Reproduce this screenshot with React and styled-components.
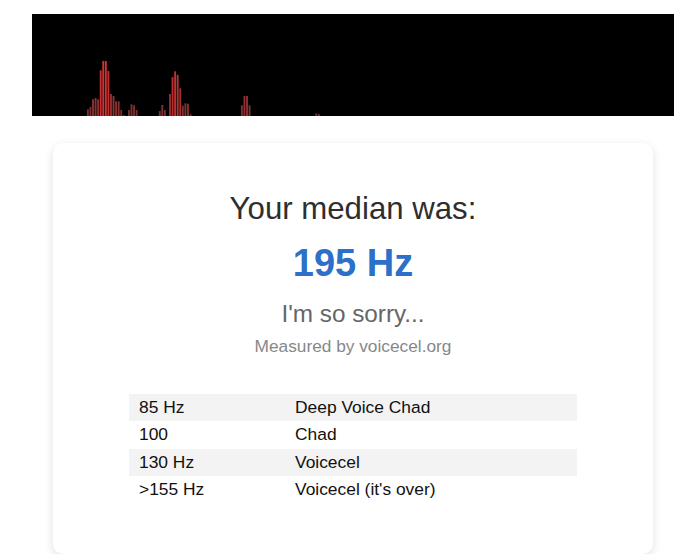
import React from "react";
import styled, { createGlobalStyle } from "styled-components";

const GlobalStyle = createGlobalStyle`
  body {
    margin: 0;
    background: #ffffff;
    font-family: "Liberation Sans", Arial, sans-serif;
  }
`;

const Page = styled.div`
  width: 642px;
  margin: 14px 0 0 32px;
`;

const Visualizer = styled.svg`
  display: block;
  width: 642px;
  height: 102px;
  background: #000000;
`;

const Card = styled.div`
  width: 600px;
  box-sizing: border-box;
  margin: 27px auto 0;
  padding: 48px 76px 51px;
  background: #ffffff;
  border-radius: 10px;
  box-shadow: 0 3px 10px rgba(0, 0, 0, 0.12);
  display: flex;
  flex-direction: column;
  align-items: center;
  text-align: center;
`;

const Title = styled.h1`
  margin: 0;
  font-size: 31.2px;
  font-weight: 400;
  color: #2e2e2e;
`;

const Result = styled.div`
  margin-top: 15px;
  font-size: 38px;
  font-weight: 700;
  color: #2c70c9;
`;

const Verdict = styled.div`
  margin-top: 15px;
  font-size: 24.3px;
  color: #666666;
`;

const Credit = styled.div`
  margin-top: 8px;
  font-size: 17.3px;
  color: #888888;
`;

const Table = styled.div`
  width: 448px;
  margin-top: 37px;
  text-align: left;
`;

const Row = styled.div`
  display: grid;
  grid-template-columns: 156px 1fr;
  height: 27.3px;
  align-items: center;
  background: ${(p) => (p.$striped ? "#f3f3f3" : "transparent")};
`;

const Cell = styled.div`
  padding: 0 10px;
  font-size: 17.4px;
  color: #111111;
`;

const bars = {
  21: 6.7, 22: 9, 23: 16.7, 24: 18, 25: 16.7, 26: 45.7, 27: 55, 28: 55, 29: 45,
  30: 22, 31: 20, 32: 14.7, 33: 14.7, 34: 6, 35: 1, 37: 6, 38: 11.7, 39: 10.7,
  40: 6, 49: 5, 50: 11, 51: 6, 53: 22, 54: 39, 55: 44.7, 56: 41, 57: 27.7,
  58: 10.3, 59: 12.7, 60: 12.3, 61: 2, 81: 10.7, 82: 20, 83: 20, 84: 10.7,
  110: 2.7, 111: 2,
};

const ranges = [
  ["85 Hz", "Deep Voice Chad"],
  ["100", "Chad"],
  ["130 Hz", "Voicecel"],
  [">155 Hz", "Voicecel (it's over)"],
];

export default function App() {
  return (
    <>
      <GlobalStyle />
      <Page>
        <Visualizer viewBox="0 0 642 102">
          {Object.entries(bars).map(([i, h]) => (
            <rect
              key={i}
              x={1 + Number(i) * 2.567}
              y={102 - h}
              width={1.9}
              height={h}
              fill={`rgb(${Math.round(105 + h * 2)}, 48, 48)`}
            />
          ))}
        </Visualizer>
        <Card>
          <Title>Your median was:</Title>
          <Result>195 Hz</Result>
          <Verdict>I'm so sorry...</Verdict>
          <Credit>Measured by voicecel.org</Credit>
          <Table>
            {ranges.map(([hz, label], i) => (
              <Row key={hz} $striped={i % 2 === 0}>
                <Cell>{hz}</Cell>
                <Cell>{label}</Cell>
              </Row>
            ))}
          </Table>
        </Card>
      </Page>
    </>
  );
}
